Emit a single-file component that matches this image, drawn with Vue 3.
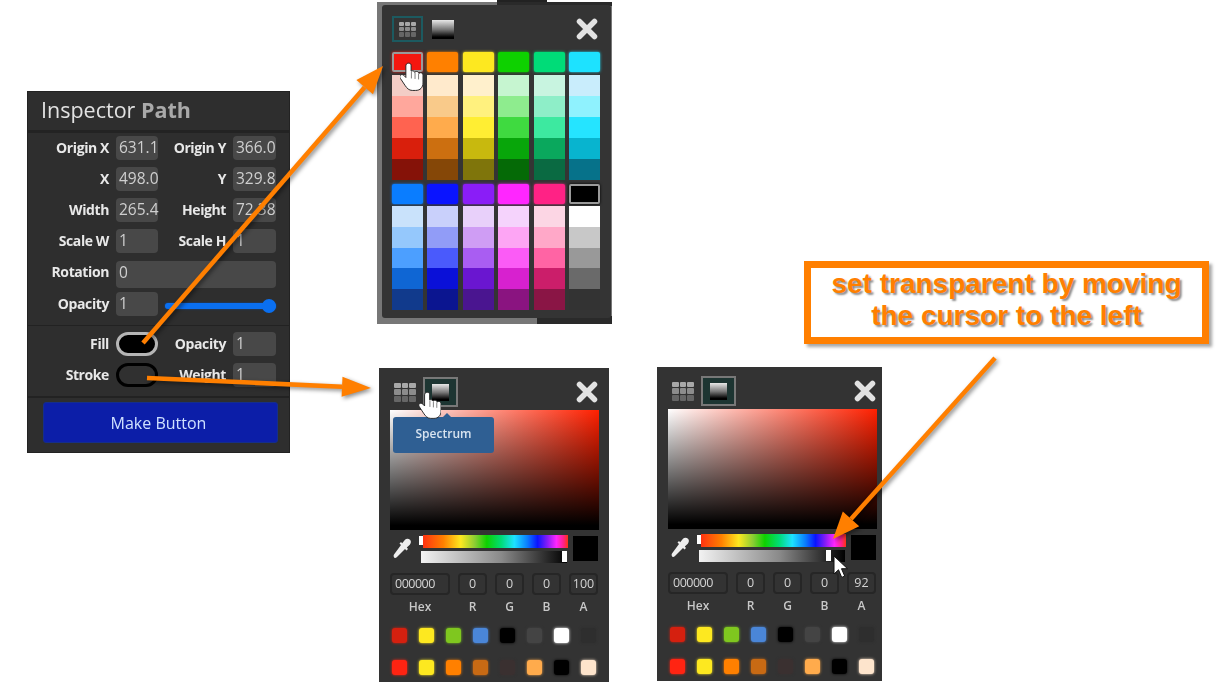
<script setup>
const rows = [
  { l: 'Origin X', v: '631.1', l2: 'Origin Y', v2: '366.0' },
  { l: 'X', v: '498.0', l2: 'Y', v2: '329.8' },
  { l: 'Width', v: '265.4', l2: 'Height', v2: '72.38' },
  { l: 'Scale W', v: '1', l2: 'Scale H', v2: '1' },
]
const paletteTop = [
  ['#f5170f', '#f3cdc6', '#ffa79c', '#ff6350', '#d91f0c', '#851208'],
  ['#ff8000', '#ffeacc', '#f9ca8a', '#ffab4c', '#cc6f10', '#854707'],
  ['#fde820', '#fff0cc', '#fff17e', '#ffee33', '#c8b90e', '#7f750b'],
  ['#0ed100', '#c6f5d0', '#8eec8e', '#3fda40', '#08a60a', '#056a06'],
  ['#00dc78', '#c8f4e0', '#8eeec8', '#3de9a0', '#0aa85d', '#0a6a42'],
  ['#1de2ff', '#c9edfc', '#8ff2fe', '#25e4ff', '#08b4cf', '#06728a'],
]
const paletteBottom = [
  ['#0a7dff', '#c9e2fb', '#95c8fc', '#4c9fff', '#0f66d4', '#113a8c'],
  ['#0a14ff', '#c9d0fb', '#919cf7', '#4a5afc', '#0a10d8', '#0b1590'],
  ['#8a1df7', '#e8d0fa', '#cf9df4', '#a95df2', '#6a16d0', '#4a1590'],
  ['#ff26ff', '#f5d3fc', '#fda5f4', '#fb5bf6', '#d721cf', '#8a1480'],
  ['#ff2285', '#fcd6e4', '#ffa8c8', '#ff64a4', '#cb1e6a', '#8a1545'],
  ['#000000', '#ffffff', '#c8c8c8', '#999999', '#6a6a6a', '#333333'],
]
const recentA = ['#d5200f', '#fde820', '#7fc71f', '#4a86d8', '#000000', '#444444', '#ffffff', '#2e2e2e']
const recentB = ['#ff2412', '#fde820', '#ff8000', '#c86a14', '#3a3030', '#ffab4c', '#000000', '#fde4cc']
const recent = [...recentA, ...recentB]
const panels = [
  { id: 'a', alpha: '100', handle: 'end' },
  { id: 'b', alpha: '92', handle: 'near' },
]
const fields = ['R', 'G', 'B', 'A']
function arrow(x1, y1, x2, y2, len, half) {
  const d = Math.hypot(x2 - x1, y2 - y1)
  const ux = (x2 - x1) / d
  const uy = (y2 - y1) / d
  const bx = x2 - ux * len
  const by = y2 - uy * len
  return {
    x1, y1, x2: bx, y2: by,
    head: `${x2},${y2} ${bx - uy * half},${by + ux * half} ${bx + uy * half},${by - ux * half}`,
  }
}
const arrows = [
  arrow(143, 343, 383, 66, 28, 11),
  arrow(147, 378, 371, 388, 29, 10),
  arrow(995, 358, 833, 539, 27, 11),
]
const handPath = 'M9 1c-1.700 0-2.900 1.200-2.900 2.900V16l-1.800-2c-1.200-1.300-3-1.400-3.900-.5-.9.900-.8 2.300.1 3.600l5 7.500c1.700 2.500 3.800 4.900 7.300 4.900h3.500c4.800 0 7.700-3.200 7.700-7.800V13.500c0-1.500-1.100-2.500-2.500-2.500-.7 0-1.300.3-1.700.7-.3-1.200-1.300-2-2.500-2-.8 0-1.500.3-2 .9-.4-1-1.300-1.600-2.400-1.600-.5 0-.9.100-1.300.3V3.900C11.900 2.200 10.700 1 9 1z'
</script>

<template>
  <div class="canvas">
    <!-- inspector -->
    <section class="inspector">
      <header class="ins-head"><span>Inspector</span> <span class="ins-path">Path</span></header>
      <div class="ins-grid ins-props">
        <template v-for="r in rows" :key="r.l">
          <label>{{ r.l }}</label>
          <div class="field">{{ r.v }}</div>
          <label>{{ r.l2 }}</label>
          <div class="field">{{ r.v2 }}</div>
        </template>
        <label>Rotation</label>
        <div class="field rotation">0</div>
        <label>Opacity</label>
        <div class="field">1</div>
        <div class="slider"><i></i></div>
      </div>
      <div class="ins-grid ins-colors">
        <label>Fill</label>
        <div class="pill pill-fill"></div>
        <label>Opacity</label>
        <div class="field">1</div>
        <label>Stroke</label>
        <div class="pill pill-stroke"></div>
        <label>Weight</label>
        <div class="field">1</div>
      </div>
      <div class="ins-foot"><button class="make">Make Button</button></div>
    </section>

    <!-- swatch palette -->
    <section class="swatch-back">
      <div class="swatch-panel">
        <div class="tabs">
          <div class="tab tab-grid tab-on-teal"><span class="ic-grid"><i v-for="n in 9" :key="n"></i></span></div>
          <div class="tab tab-spec"><span class="ic-spec"></span></div>
          <svg class="close" viewBox="0 0 22 22"><path d="M3.500 3.500l15 15M18.500 3.500l-15 15" stroke="#e2e2e2" stroke-width="5.500" stroke-linecap="round"/></svg>
        </div>
        <div class="pal">
          <div v-for="(col, i) in paletteTop" :key="i" class="pal-col">
            <div class="pal-head" :class="{ picked: i === 0 }" :style="{ background: col[0], boxShadow: `0 0 3px ${col[0]}` }"></div>
            <div class="pal-stack"><div v-for="c in col.slice(1)" :key="c" :style="{ background: c }"></div></div>
          </div>
        </div>
        <div class="pal pal-2">
          <div v-for="(col, i) in paletteBottom" :key="i" class="pal-col">
            <div class="pal-head" :class="{ picked: i === 5 }" :style="{ background: col[0], boxShadow: `0 0 3px ${col[0]}` }"></div>
            <div class="pal-stack"><div v-for="c in col.slice(1)" :key="c" :style="{ background: c }"></div></div>
          </div>
        </div>
      </div>
    </section>

    <!-- spectrum panels -->
    <section v-for="p in panels" :key="p.id" class="spec-panel" :class="'spec-' + p.id">
      <div class="tabs tabs-spec">
        <div class="tab tab-grid"><span class="ic-grid"><i v-for="n in 9" :key="n"></i></span></div>
        <div class="tab tab-spec tab-on-gray"><span class="ic-spec"></span></div>
        <svg class="close" viewBox="0 0 22 22"><path d="M3.500 3.500l15 15M18.500 3.500l-15 15" stroke="#e2e2e2" stroke-width="5.500" stroke-linecap="round"/></svg>
      </div>
      <div class="spectrum"></div>
      <div class="bars">
        <svg class="dropper" viewBox="0 0 20 20"><path d="M1 19c-.6-.6-.5-1.600 0-2.600L8 7 6.500 5.500 8 4l1.200 1.200 2.800-3.400c1.300-1.500 3.700-1.400 5 0 1.300 1.400 1.200 3.500-.2 4.900l-3 2.800 1.200 1.500-1.500 1.500-1.500-1.500-8 8c-1 .9-2.200 1.200-3 .5z" fill="#eee"/></svg>
        <div class="bar-col">
          <div class="hue"><i></i></div>
          <div class="alpha" :class="'alpha-' + p.handle"><i></i></div>
        </div>
        <div class="preview"></div>
      </div>
      <div class="inputs">
        <div class="num hex">000000</div>
        <div class="num">0</div>
        <div class="num">0</div>
        <div class="num">0</div>
        <div class="num">{{ p.alpha }}</div>
        <span>Hex</span>
        <span v-for="f in fields" :key="f">{{ f }}</span>
      </div>
      <div class="recent">
        <div v-for="(c, i) in recent" :key="i" class="dot" :style="{ background: c, boxShadow: `0 0 3px ${c}` }"></div>
      </div>
      <div v-if="p.id === 'a'" class="tooltip">Spectrum</div>
    </section>

    <!-- callout -->
    <div class="callout">set transparent by moving<br />the cursor to the left</div>

    <!-- arrows -->
    <svg class="arrows" viewBox="0 0 1229 692" width="1229" height="692">
      <g v-for="(a, i) in arrows" :key="i">
        <line :x1="a.x1" :y1="a.y1" :x2="a.x2" :y2="a.y2" stroke="#ff7f00" stroke-width="4.500" />
        <polygon :points="a.head" fill="#ff7f00" />
      </g>
    </svg>

    <!-- cursors -->
    <svg class="cursor hand-1" viewBox="0 0 24 32"><path :d="handPath" fill="#fff" stroke="#222" stroke-width="1"/><path d="M11.900 10v7M15.700 11v6.500M19.400 12v6" stroke="#555" stroke-width=".8" fill="none"/></svg>
    <svg class="cursor hand-2" viewBox="0 0 24 32"><path :d="handPath" fill="#fff" stroke="#222" stroke-width="1"/><path d="M11.900 10v7M15.700 11v6.500M19.400 12v6" stroke="#555" stroke-width=".8" fill="none"/></svg>
    <svg class="cursor arrow-cur" viewBox="0 0 15 24"><path d="M1 1v18l4.500-4.200 3.200 7.600 3-1.300-3.200-7.400H14.500z" fill="#fff" stroke="#111" stroke-width="1"/></svg>
  </div>
</template>

<style>
html, body { margin: 0; background: #fff; }
</style>

<style scoped>
.canvas {
  position: relative;
  width: 1229px;
  height: 692px;
  overflow: hidden;
  background: #fff;
  font-family: "Open Sans", "Noto Sans", sans-serif;
}
/* inspector */
.inspector {
  position: absolute;
  left: 27px;
  top: 91px;
  width: 263px;
  height: 362px;
  box-sizing: border-box;
  background: #2e2e2e;
  border: 1px solid #222;
  display: flex;
  flex-direction: column;
  filter: blur(0.35px);
}
.ins-head {
  height: 41px;
  box-sizing: border-box;
  padding: 3px 0 0 13px;
  font-size: 21.500px;
  line-height: 30px;
  color: #e2e2e2;
  border-bottom: 3px solid #232323;
  flex: none;
}
.ins-path { color: #a9a9a9; font-weight: 700; }
.ins-grid {
  display: grid;
  grid-template-columns: 80px 42px 61px 43px;
  column-gap: 7px;
  row-gap: 7px;
  grid-auto-rows: 24px;
  padding: 0 0 9px 1px;
  border-bottom: 1px solid #222;
  flex: none;
  width: 260px;
}
.ins-props {
  margin-top: 3px;
  grid-template-rows: 24px 24px 24px 24px 25px 24px;
}
.ins-grid > label {
  display: flex;
  justify-content: flex-end;
  font-size: 14px;
  font-weight: 700;
  letter-spacing: -0.4px;
  line-height: 24px;
  color: #e8e8e8;
  white-space: nowrap;
}
.field {
  background: #484848;
  border-radius: 4px;
  color: #cfcfcf;
  font-size: 15.500px;
  line-height: 22px;
  padding: 0 3px;
  white-space: nowrap;
  box-sizing: border-box;
}
.rotation { grid-column: 2 / span 3; height: 27px; margin-top: 1px; }
.slider {
  grid-column: 3 / span 2;
  align-self: center;
  height: 6px;
  margin-top: 3px;
  background: #0a6ff0;
  border-radius: 3px;
  position: relative;
  box-shadow: 0 0 2px #0a4fb0;
}
.slider i {
  position: absolute;
  right: 0;
  top: -4px;
  width: 14px;
  height: 14px;
  border-radius: 50%;
  background: #0a6ff0;
}
.ins-colors {
  margin-top: 6px;
  padding-bottom: 9px;
  border-bottom: 2px solid #222;
}
.pill {
  border-radius: 12px;
  box-sizing: border-box;
  background: #000;
  border: 3px solid #b5b5b5;
}
.pill-stroke { background: #303030; border-color: #000; }
.ins-foot { padding: 4px 11px 0 15px; }
.make {
  display: block;
  width: 100%;
  height: 41px;
  padding: 0 4px 0 0;
  border: 1px solid #152e8a;
  border-radius: 3px;
  background: #0c1ea8;
  color: #cfe0ff;
  font: 400 16px "Open Sans", sans-serif;
}
/* swatch palette */
.swatch-back {
  position: absolute;
  left: 377px;
  top: 2px;
  width: 235px;
  height: 322px;
  background:
    linear-gradient(to right, #777 120px, #2a2a2a 120px) top / 100% 4px no-repeat,
    linear-gradient(to right, #777 160px, #2a2a2a 160px) bottom / 100% 8px no-repeat,
    #777;
}
.swatch-back::before {
  content: "";
  position: absolute;
  left: 120px;
  top: -2px;
  width: 50px;
  height: 2px;
  background: #222;
}
.swatch-panel {
  position: absolute;
  left: 5px;
  top: 3px;
  width: 229px;
  height: 313px;
  box-sizing: border-box;
  padding: 11px 11px 0 10px;
  background: #343434;
  border-radius: 3px;
  filter: blur(0.3px);
}
.tabs {
  display: flex;
  align-items: center;
  height: 26px;
}
.tab {
  width: 31px;
  height: 26px;
  box-sizing: border-box;
  display: flex;
  align-items: center;
  justify-content: center;
  flex: none;
}
.tab-on-teal { border: 2px solid #1c5a60; }
.tab-spec { margin-left: 4px; }
.ic-grid {
  display: grid;
  grid-template-columns: repeat(3, 1fr);
  gap: 1px;
  width: 17px;
  height: 15px;
}
.ic-grid i { border-radius: 1px; }
.ic-grid i:nth-child(-n + 3) { background: #a8a8a8; }
.ic-grid i:nth-child(n + 4) { background: #8c8c8c; }
.ic-grid i:nth-child(n + 7) { background: #666; }
.ic-spec {
  display: block;
  width: 22px;
  height: 19px;
  background: linear-gradient(#e8e8e8, #777 50%, #000 90%);
}
.close {
  display: block;
  flex: none;
  width: 22px;
  height: 22px;
  margin-left: auto;
  margin-right: 2px;
}
.pal {
  display: grid;
  grid-template-columns: repeat(6, 31px);
  column-gap: 4.400px;
  margin-top: 10px;
}
.pal-2 { margin-top: 4px; }
.pal-head {
  height: 20px;
  border-radius: 2px;
  box-sizing: border-box;
}
.pal-head.picked { border: 2px solid #9a9a9a; }
.pal-stack { margin-top: 3px; }
.pal-stack div { height: 21px; }
.pal-2 .pal-stack { margin-top: 2px; }
.pal-2 .pal-stack div { height: 20.800px; }
/* spectrum panels */
.spec-panel {
  position: absolute;
  box-sizing: border-box;
  background: #333;
  height: 314px;
  padding: 9px 10px 0 11px;
  filter: blur(0.3px);
}
.spec-a { left: 379px; top: 368px; width: 230px; }
.spec-b { left: 657px; top: 367px; width: 225px; padding-right: 5px; }
.tabs-spec { height: 30px; }
.tabs-spec .tab-grid { width: 26px; margin-left: 4px; justify-content: flex-start; }
.tabs-spec .ic-grid { width: 22px; height: 19px; }
.tabs-spec .tab-spec { width: 35px; height: 30px; margin-left: 3px; }
.tabs-spec .tab-spec .ic-spec { width: 17px; height: 17px; }
.tab-on-gray { border: 2px solid #787878; background: #1d3532; }
.tabs-spec .close { margin-right: 1px; }
.spectrum {
  width: 209px;
  height: 120px;
  margin-top: 3px;
  background: linear-gradient(to top, #000 4%, rgba(0, 0, 0, 0) 100%), linear-gradient(to right, #fff, #ff2000);
}
.bars {
  display: grid;
  grid-template-columns: 28px 147px 25px;
  column-gap: 3px;
  align-items: start;
  margin-top: 5px;
}
.dropper { width: 20px; height: 20px; margin: 3px 0 0 3px; }
.bar-col { display: flex; flex-direction: column; gap: 3px; }
.hue {
  height: 13px;
  margin-left: 2px;
  position: relative;
  background: linear-gradient(to right, #f31 0, #ff8000 14%, #fde820 26%, #8c3 36%, #0ed100 44%, #00dc78 54%, #1de2ff 63%, #0a7dff 72%, #0a14ff 79%, #8a1df7 86%, #ff26ff 92%, #ff2285 97%, #f31);
}
.hue i {
  position: absolute;
  left: -4px;
  top: 1px;
  width: 4px;
  height: 9px;
  background: #fff;
}
.alpha {
  height: 12px;
  position: relative;
  margin-right: 1px;
  background: linear-gradient(to right, #f2f2f2, #8a8a8a 55%, #000);
}
.alpha i {
  position: absolute;
  top: 0;
  width: 5px;
  height: 11px;
  background: #fff;
}
.alpha-end i { right: 0; }
.alpha-near i { right: 14px; }
.preview { width: 25px; height: 25px; margin: 1px 0 0 2px; background: #000; }
.inputs {
  display: grid;
  grid-template-columns: 60px 29px 29px 29px 29px;
  column-gap: 8px;
  row-gap: 2px;
  margin-top: 10px;
  font-size: 12px;
  font-weight: 600;
  color: #c8c8c8;
  text-align: center;
  line-height: 20px;
}
.num {
  height: 22px;
  box-sizing: border-box;
  border: 2px solid #262626;
  border-radius: 4px;
  line-height: 18px;
  font-size: 12.500px;
  font-weight: 400;
  color: #d4d4d4;
  white-space: nowrap;
}
.hex { text-align: left; padding-left: 3px; letter-spacing: -0.5px; }
.recent {
  display: grid;
  grid-template-columns: repeat(8, 15px);
  column-gap: 12px;
  row-gap: 17px;
  margin: 11px 0 0 2px;
}
.dot { height: 15px; border-radius: 3px; }
.tooltip {
  position: absolute;
  left: 14px;
  top: 49px;
  width: 101px;
  height: 36px;
  border-radius: 3px;
  background: #2f5f93;
  color: #d8e4f0;
  font-size: 12px;
  font-weight: 600;
  line-height: 34px;
  text-align: center;
}
.tooltip::before {
  content: "";
  position: absolute;
  left: 50px;
  top: -4px;
  border: 4px solid transparent;
  border-top: 0;
  border-bottom-color: #2f5f93;
}
/* callout */
.callout {
  position: absolute;
  left: 804px;
  top: 261px;
  width: 405px;
  height: 83px;
  box-sizing: border-box;
  border: 7px solid #ff7f00;
  background: #fff;
  box-shadow: 3px 3px 3px rgba(0, 0, 0, 0.35);
  color: #ff7f00;
  font: 700 28px/32px "Liberation Sans", Arial, sans-serif;
  text-align: center;
  text-shadow: 2px 2px 2px rgba(0, 0, 0, 0.45);
}
.arrows {
  position: absolute;
  left: 0;
  top: 0;
  pointer-events: none;
  filter: drop-shadow(2px 2px 2px rgba(0, 0, 0, 0.45));
}
.cursor { position: absolute; }
.hand-1 { left: 400px; top: 62px; width: 23px; height: 31px; }
.hand-2 { left: 419px; top: 391px; width: 22px; height: 30px; }
.arrow-cur { left: 833px; top: 555px; width: 15px; height: 24px; }
</style>
